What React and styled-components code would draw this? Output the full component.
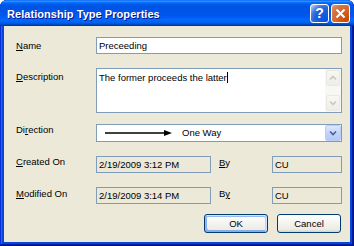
import React from 'react';
import styled, { createGlobalStyle } from 'styled-components';

const Global = createGlobalStyle`
  html, body { margin: 0; padding: 0; background: #ffffff; }
  body { font-family: "Liberation Sans", Arial, sans-serif; font-size: 9.5px; color: #000; }
  * { box-sizing: border-box; }
`;

const Window = styled.div`
  width: 354px;
  height: 246px;
  display: flex;
  flex-direction: column;
  background: #0846d8;
  border-radius: 7px 7px 0 0;
  overflow: hidden;
  box-shadow: inset -1px -1px #00138c, inset 1px 1px #0831d9, inset -2px -2px #001ea0, inset 2px 2px #166aee;
`;

const TitleBar = styled.div`
  height: 26px;
  flex: none;
  display: flex;
  align-items: center;
  padding: 0 4px 0 7px;
  background: linear-gradient(180deg, #0058ee 0%, #3593ff 4%, #288eff 6%, #127dff 8%, #036ffc 10%, #0262ee 14%, #0057e5 20%, #0054e3 24%, #0055eb 56%, #005bf5 66%, #026afe 76%, #0062ef 86%, #0052d6 92%, #0040ab 96%, #003092 100%);
`;

const Title = styled.div`
  flex: 1;
  color: #fff;
  font-weight: bold;
  font-size: 11px;
  margin-top: 2px;
  text-shadow: 1px 1px #0f1089;
  letter-spacing: 0.05px;
`;

const CaptionButton = styled.div`
  width: 19px;
  height: 19px;
  margin-left: ${p => p.$gap || 0}px;
  border: 1px solid #fff;
  border-radius: 3px;
  display: flex;
  align-items: center;
  justify-content: center;
  color: #fff;
  font-weight: bold;
  font-size: 14px;
  background: ${p => p.$red
    ? 'radial-gradient(circle at 90% 90%, #cc4600 0%, #dc6527 55%, #cd7546 70%, #e78c5c 90%, #f0a37b 100%)'
    : 'radial-gradient(circle at 90% 90%, #0054e9 0%, #2263d5 55%, #4479e4 70%, #a3bbec 90%, #c9d7f5 100%)'};
`;

const Client = styled.div`
  flex: 1;
  margin: 0 4px 4px;
  background: #ece9d8;
  padding: 11px 8px 0 12px;
  display: flex;
  flex-direction: column;
`;

const Row = styled.div`
  display: flex;
  align-items: flex-start;
  margin-top: ${p => p.$gap || 0}px;
  height: ${p => p.$h}px;
`;

const Label = styled.div`
  width: 80px;
  flex: none;
  padding-top: ${p => p.$off || 0}px;
  line-height: 12px;
  white-space: nowrap;
`;

const Key = styled.span`
  text-decoration: underline;
  text-underline-offset: 1px;
`;

const Field = styled.div`
  position: relative;
  width: ${p => (p.$w ? `${p.$w}px` : 'auto')};
  flex: ${p => (p.$w ? 'none' : '1')};
  height: 100%;
  border: 1px solid #7f9db9;
  background: ${p => (p.$disabled ? '#ece9d8' : '#ffffff')};
  padding: ${p => (p.$multi ? '3px 2px' : '0 2px')};
  display: flex;
  align-items: ${p => (p.$multi ? 'flex-start' : 'center')};
  line-height: 12px;
  white-space: nowrap;
`;

const Caret = styled.span`
  display: inline-block;
  width: 1px;
  height: 11px;
  background: #000;
  vertical-align: -2px;
`;

const ScrollBar = styled.div`
  position: absolute;
  right: 0;
  top: 0;
  bottom: 0;
  width: 16px;
  background: #f7f7f3;
  display: flex;
  flex-direction: column;
  justify-content: space-between;
  padding: 1px 1px;
`;

const ScrollButton = styled.div`
  height: 16px;
  border: 1px solid #e9e8e1;
  border-radius: 2px;
  background: linear-gradient(180deg, #f8f7f3, #eeede6);
  display: flex;
  align-items: center;
  justify-content: center;
`;

const ComboButton = styled.div`
  position: absolute;
  right: 0;
  top: 0;
  width: 16px;
  height: 16px;
  border: 1px solid #b9cdf8;
  border-radius: 2px;
  background: linear-gradient(180deg, #dce7fe 0%, #c1d4fb 50%, #b3c9f7 100%);
  display: flex;
  align-items: center;
  justify-content: center;
`;

const ComboText = styled.span`
  margin-left: 9px;
`;

const ByLabel = styled.div`
  width: 61px;
  flex: none;
  padding-left: 8px;
  padding-top: ${p => p.$off || 0}px;
  line-height: 12px;
`;

const ButtonRow = styled.div`
  display: flex;
  justify-content: flex-end;
  gap: 9px;
  margin-top: 10px;
  padding-right: 1px;
`;

const Button = styled.div`
  width: 64px;
  height: 19px;
  border: 1px solid #003c74;
  border-radius: 3px;
  background: linear-gradient(180deg, #ffffff, #ecebe5 86%, #d8d0c4);
  display: flex;
  align-items: center;
  justify-content: center;
  box-shadow: ${p => (p.$default
    ? 'inset -1px 1px #cee7ff, inset 1px 2px #98b8ea, inset -2px 2px #bcd4f6, inset 1px -1px #89ade4, inset 2px -2px #89ade4'
    : 'none')};
`;

const Chevron = ({ color, up }) => (
  <svg width="8" height="6" viewBox="0 0 8 6">
    <path d={up ? 'M1 4.5 L4 1.5 L7 4.5' : 'M1 1.5 L4 4.5 L7 1.5'} fill="none" stroke={color} strokeWidth="1.6" />
  </svg>
);

const DirectionArrow = () => (
  <svg width="68" height="8" viewBox="0 0 68 8">
    <line x1="0" y1="4" x2="60" y2="4" stroke="#000" strokeWidth="1.4" />
    <path d="M59 1 L67 4 L59 7 Z" fill="#000" />
  </svg>
);

export default function App() {
  return (
    <>
      <Global />
      <Window>
        <TitleBar>
          <Title>Relationship Type Properties</Title>
          <CaptionButton>?</CaptionButton>
          <CaptionButton $red $gap={2}>
            <svg width="11" height="11" viewBox="0 0 11 11">
              <path d="M1.5 1.5 L9.5 9.5 M9.5 1.5 L1.5 9.5" stroke="#fff" strokeWidth="2" />
            </svg>
          </CaptionButton>
        </TitleBar>
        <Client>
          <Row $h={17}>
            <Label $off={3}><Key>N</Key>ame</Label>
            <Field>Preceeding</Field>
          </Row>
          <Row $h={45} $gap={14}>
            <Label $off={3}><Key>D</Key>escription</Label>
            <Field $multi>
              The former proceeds the latter<Caret />
              <ScrollBar>
                <ScrollButton><Chevron color="#c9c8c0" up /></ScrollButton>
                <ScrollButton><Chevron color="#c9c8c0" /></ScrollButton>
              </ScrollBar>
            </Field>
          </Row>
          <Row $h={18} $gap={11}>
            <Label $off={0}>Di<Key>r</Key>ection</Label>
            <Field style={{ paddingLeft: 8 }}>
              <DirectionArrow />
              <ComboText>One Way</ComboText>
              <ComboButton><Chevron color="#4d6185" /></ComboButton>
            </Field>
          </Row>
          <Row $h={17} $gap={14}>
            <Label $off={0}><Key>C</Key>reated On</Label>
            <Field $w={115} $disabled>2/19/2009 3:12 PM</Field>
            <ByLabel $off={1}><Key>B</Key>y</ByLabel>
            <Field $w={70} $disabled>CU</Field>
          </Row>
          <Row $h={17} $gap={14}>
            <Label $off={1}><Key>M</Key>odified On</Label>
            <Field $w={115} $disabled>2/19/2009 3:14 PM</Field>
            <ByLabel $off={1}>B<Key>y</Key></ByLabel>
            <Field $w={70} $disabled>CU</Field>
          </Row>
          <ButtonRow>
            <Button $default>OK</Button>
            <Button>Cancel</Button>
          </ButtonRow>
        </Client>
      </Window>
    </>
  );
}
